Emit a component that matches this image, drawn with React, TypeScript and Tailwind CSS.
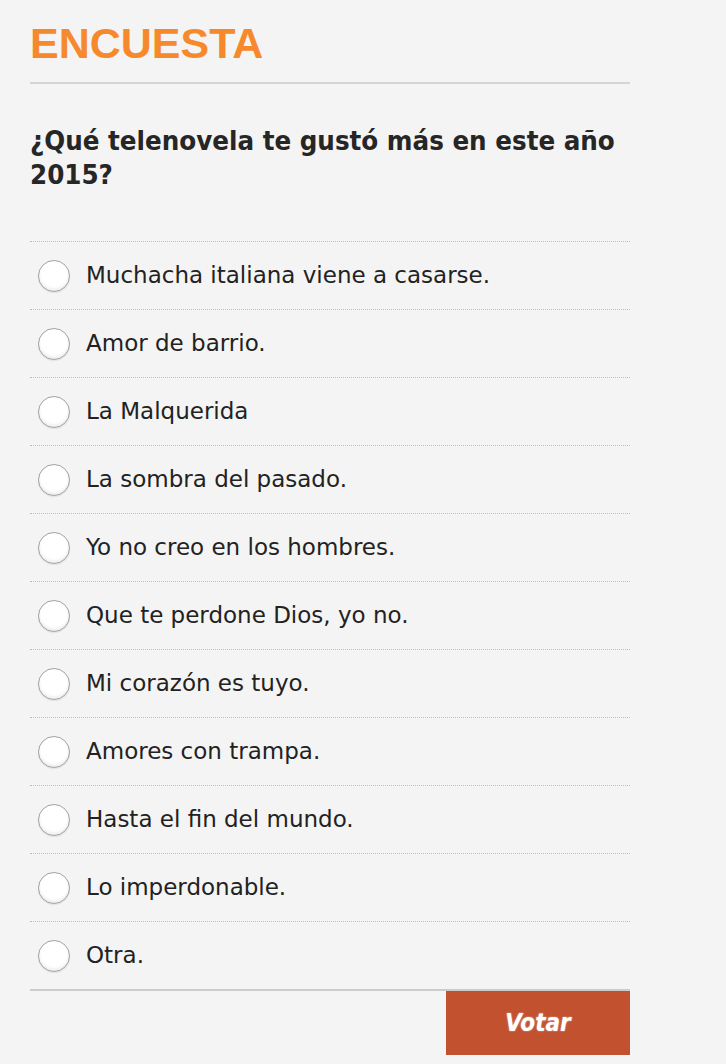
import { useState } from 'react';

const options = [
  'Muchacha italiana viene a casarse.',
  'Amor de barrio.',
  'La Malquerida',
  'La sombra del pasado.',
  'Yo no creo en los hombres.',
  'Que te perdone Dios, yo no.',
  'Mi corazón es tuyo.',
  'Amores con trampa.',
  'Hasta el fin del mundo.',
  'Lo imperdonable.',
  'Otra.',
];

export default function App() {
  const [selected, setSelected] = useState<string | null>(null);

  return (
    <div className="min-h-screen bg-[#f4f4f4] font-['DejaVu_Sans',sans-serif]">
      <div className="w-[600px] ml-[30px] pt-[22px]">
        {/* Title */}
        <h2 className="font-['Liberation_Sans',sans-serif] font-bold text-[43px] leading-[42px] text-[#f7892d] pb-[18px] border-b-2 border-[#d5d5d5]">
          ENCUESTA
        </h2>

        {/* Question */}
        <p className="mt-[40px] text-[27.4px] leading-[34px] font-bold text-[#262626] [font-stretch:condensed]">
          ¿Qué telenovela te gustó más en este año 2015?
        </p>

        {/* Options */}
        <ul className="mt-[49px]">
          {options.map((opt) => (
            <li
              key={opt}
              className="h-[68px] border-t border-dotted border-[#bdbdbd] flex items-center"
            >
              <label className="flex items-center cursor-pointer">
                <input
                  type="radio"
                  name="encuesta"
                  checked={selected === opt}
                  onChange={() => setSelected(opt)}
                  className="appearance-none ml-[8px] w-[32px] h-[32px] rounded-full border border-[#a3a3a3] bg-white shadow-[inset_0_-2px_3px_rgba(0,0,0,0.08),0_1px_1px_rgba(0,0,0,0.08)] checked:bg-[#c1512f]"
                />
                <span className="ml-[16px] text-[23px] text-[#222]">
                  {opt}
                </span>
              </label>
            </li>
          ))}
        </ul>

        {/* Submit */}
        <div className="border-t-2 border-[#cccccc] flex justify-end">
          <button className="w-[184px] h-[64px] bg-[#c1512f] text-white italic font-bold text-[24px] [font-stretch:condensed] [text-shadow:0_0_2px_rgba(255,255,255,0.6)]">
            Votar
          </button>
        </div>
      </div>
    </div>
  );
}
